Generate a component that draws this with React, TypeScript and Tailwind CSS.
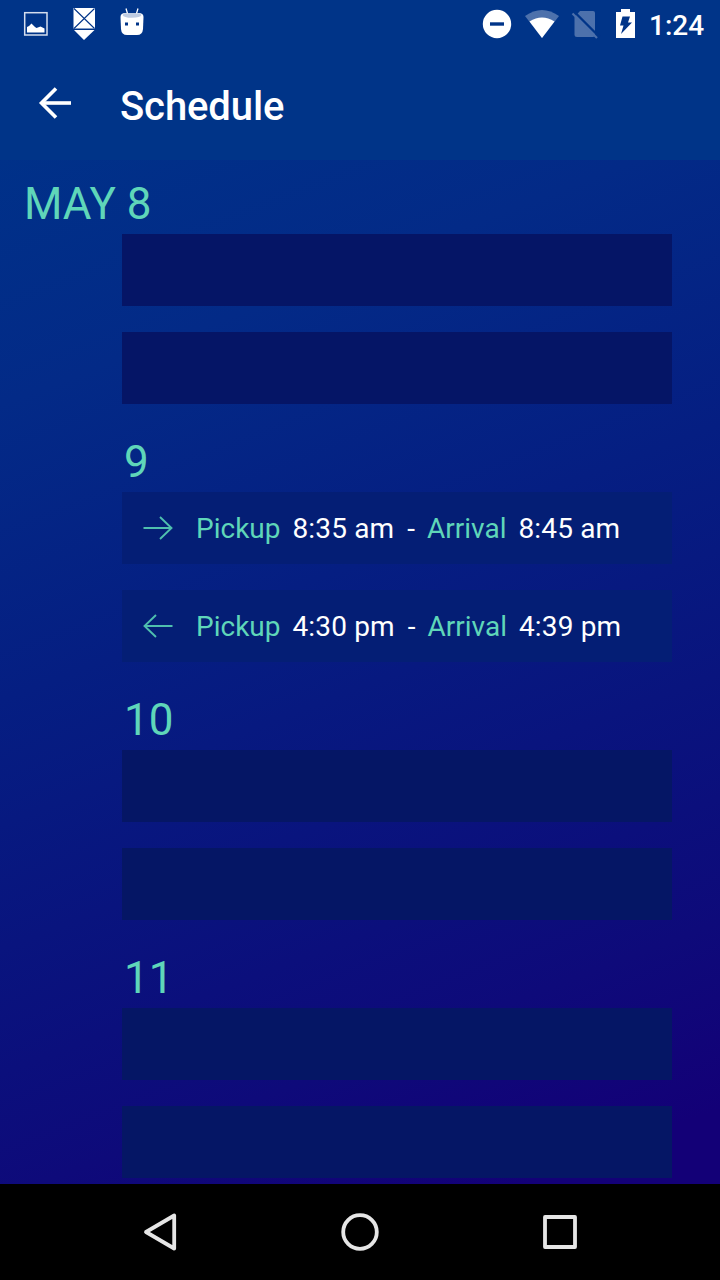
import React from "react";

type Trip = { dir: "to" | "from"; pickup: string; arrival: string };
type Day = { label: string; tone: string; trips: (Trip | null)[] };

const days: Day[] = [
  { label: "MAY 8", tone: "bg-[#051566]", trips: [null, null] },
  {
    label: "9",
    tone: "bg-[#041e75]",
    trips: [
      { dir: "to", pickup: "8:35 am", arrival: "8:45 am" },
      { dir: "from", pickup: "4:30 pm", arrival: "4:39 pm" },
    ],
  },
  { label: "10", tone: "bg-[#051665]", trips: [null, null] },
  { label: "11", tone: "bg-[#051665]", trips: [null, null] },
];

function StatusBar() {
  return (
    <div className="flex h-12 items-center justify-between bg-[#003488]">
      <div className="flex">
        <svg width="160" height="48" viewBox="0 0 160 48">
          <rect x="24.700" y="12.700" width="22.300" height="22.300" fill="none" stroke="#d5deee" strokeWidth="1.500" />
          <path d="M27 32.500v-5.500l2-1 2.500-2.500 3.500 3.500 1.500 1 4-1.500 4 2v4z" fill="#fff" />
          <path d="M73.500 8h21.500v20.500H73.500z M74 30h20.500L84 40z" fill="#fff" />
          <path d="M74 8.500l20.500 20M94.500 8.500L74 28.500" stroke="#003488" strokeWidth="1.100" />
          <path d="M120.500 17q0-4 5-4h13q5 0 5 4l-.5 12q-.5 6-6 6h-10q-5.500 0-6-6z" fill="#fff" />
          <path d="M122.500 15q1-2 5-2h9q4 0 5 2-1 2.800-9.500 2.800t-9.500-2.800z" fill="#bfcce2" />
          <path d="M126 8.500l1.500 5M138 8.500l-1.500 5" stroke="#fff" strokeWidth="1.300" />
          <path d="M125 22.500h3v3h-3zM136 22.500h3v3h-3z" fill="#003488" />
        </svg>
      </div>
      <div className="flex items-center">
        <svg width="180" height="48" viewBox="469 0 180 48">
          <circle cx="497" cy="24" r="14.200" fill="#fff" />
          <path d="M490 22.300h14v3.400h-14z" fill="#003488" />
          <path d="M525 16q17-12 34 0L542 38z" fill="#fff" opacity=".3" />
          <path d="M529.500 21.500q12.500-8 25 0L542 38z" fill="#fff" />
          <path d="M574.500 17l5.500-6h13q2 0 2 2v22q0 2-2 2h-16q-2.500 0-2.500-2.500z" fill="#4d71ac" />
          <path d="M573.500 11l26 26" stroke="#003488" strokeWidth="2.400" />
          <path d="M572.500 13.500l24.500 24.500" stroke="#4d71ac" strokeWidth="2.200" />
          <path d="M616 12h5V9h9v3h5v26h-19z" fill="#fff" />
          <path d="M622.500 16.500h7.500l-2 6h4L621 34l2.500-8.500h-3.500z" fill="#003488" />
        </svg>
        <span className="w-[71px] pt-[3px] text-[28px] leading-8 font-medium text-white">1:24</span>
      </div>
    </div>
  );
}

function Header() {
  return (
    <header className="flex h-28 bg-[#003488] pl-[38px] pt-[38px]">
      <svg width="34" height="34" viewBox="0 0 34 34" fill="none" stroke="#fff" strokeWidth="3.600">
        <path d="M18 2.500L3.500 17 18 31.500" />
        <path d="M3 17h30" />
      </svg>
      <h1 className="ml-12 text-[40px] leading-[42px] font-medium tracking-[-0.1px] text-white">Schedule</h1>
    </header>
  );
}

function TripRow({ trip, tone }: { trip: Trip | null; tone: string }) {
  return (
    <div className={`flex h-[72px] w-[550px] items-center ${tone}`}>
      {trip && (
        <>
          <svg
            width="30"
            height="26"
            viewBox="0 0 30 26"
            fill="none"
            stroke="#4fbfae"
            strokeWidth="1.900"
            className={trip.dir === "to" ? "ml-[21px]" : "ml-[21px] rotate-180"}
          >
            <path d="M.5 13H28M17 2L28.500 13 17 24" />
          </svg>
          <p className="ml-[23px] flex pt-0.5 text-[28px] leading-8 whitespace-nowrap text-white">
            <span className="mr-3 text-[#5fd6b9]">Pickup</span>
            <span className="tracking-[0.15px]">{trip.pickup}</span>
            <span className="mr-3 ml-[13px]">-</span>
            <span className="mr-3 text-[#5fd6b9]">Arrival</span>
            <span className="tracking-[0.15px]">{trip.arrival}</span>
          </p>
        </>
      )}
    </div>
  );
}

export default function App() {
  return (
    <div className="flex h-[1280px] w-[720px] flex-col overflow-hidden bg-[linear-gradient(159deg,#003189_10%,#032a87_26%,#051e82_45%,#0b0f7c_69%,#0e0a7a_77%,#130077_89%)] font-['Roboto',sans-serif]">
      <StatusBar />
      <Header />
      <main className="h-[1024px]">
        {days.map((d, i) => (
          <section key={d.label}>
            <h2
              className={
                i === 0
                  ? "h-[74px] pt-[18px] pl-6 text-[44px] leading-[52px] text-[#5fd6b9]"
                  : "h-[88px] pt-8 pl-[124px] text-[44px] leading-[52px] text-[#5fd6b9]"
              }
            >
              {d.label}
            </h2>
            <div className="flex flex-col gap-[26px] pl-[122px]">
              {d.trips.map((t, j) => (
                <TripRow key={j} trip={t} tone={d.tone} />
              ))}
            </div>
          </section>
        ))}
      </main>
      <nav className="flex h-24 items-center justify-center bg-black">
        <svg width="440" height="96" viewBox="140 0 440 96" fill="none" stroke="#e6e6e6" strokeWidth="3.800" strokeLinejoin="round">
          <path d="M174.200 31.500v33L146 48z" />
          <circle cx="360" cy="48" r="16.800" />
          <rect x="545" y="33" width="30" height="30" />
        </svg>
      </nav>
    </div>
  );
}
